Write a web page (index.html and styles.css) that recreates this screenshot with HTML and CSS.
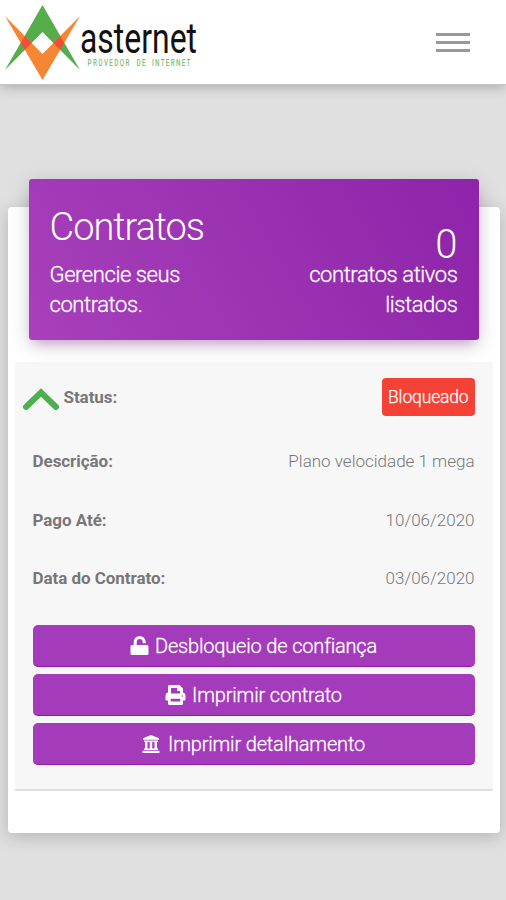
FILE: index.html
```html
<!doctype html>
<html lang="pt-br">
<head>
	<meta charset="utf-8">
	<title>Asternet - Contratos</title>
	<link rel="stylesheet" href="styles.css">
</head>
<body>

	<!--topo-->
	<header class="topo">
		<svg class="logo" width="206" height="84" viewBox="0 0 206 84">
			<path fill="#56ad4b" d="M42.5 5L80 70 42.5 32 5 70z"/>
			<path fill="#f58634" d="M5 16L42.5 54 80 16 42.5 80z"/>
			<path fill="#f04e37" d="M24.7 36L31.6 43 24.8 50 20.7 43zM60.3 36L53.4 43 60.2 50 64.3 43z"/>
			<text class="logo_nome" x="80" y="53" textLength="117" lengthAdjust="spacingAndGlyphs">asternet</text>
			<g class="logo_sub" transform="scale(.7 1)">
				<text x="125" y="66" textLength="60">PROVEDOR</text>
				<text x="195" y="66" textLength="13">DE</text>
				<text x="217" y="66" textLength="55">INTERNET</text>
			</g>
		</svg>
		<button class="menu" type="button" aria-label="Menu">
			<span></span>
			<span></span>
			<span></span>
		</button>
	</header>
	<!--fim topo-->

	<!--card-->
	<main class="card">
		<div class="card_header">
			<div class="card_titulo">
				<h1>Contratos</h1>
				<p>Gerencie seus contratos.</p>
			</div>
			<div class="card_total">
				<strong>0</strong>
				<p>contratos ativos listados</p>
			</div>
		</div>

		<section class="contrato">
			<div class="linha status">
				<svg class="seta" width="36" height="24" viewBox="0 0 36 24">
					<path d="M3 20L18 5.500 33 20" fill="none" stroke="#4caf50" stroke-width="6" stroke-linecap="round"/>
				</svg>
				<b>Status:</b>
				<span class="badge">Bloqueado</span>
			</div>
			<div class="linha"><b>Descrição:</b><span>Plano velocidade 1 mega</span></div>
			<div class="linha"><b>Pago Até:</b><span>10/06/2020</span></div>
			<div class="linha"><b>Data do Contrato:</b><span>03/06/2020</span></div>

			<div class="botoes">
				<button class="btn" type="button">
					<svg width="19" height="22" viewBox="0 0 19 22">
						<path fill="#fff" d="M2 10h1.700V7a6 6 0 0 1 12 0v1.200h-3V7a3 3 0 0 0-6 0v3H17a1.500 1.500 0 0 1 1.500 1.500v7A1.500 1.500 0 0 1 17 20H2a1.500 1.500 0 0 1-1.500-1.500v-7A1.500 1.500 0 0 1 2 10z"/>
					</svg>
					<span>Desbloqueio de confiança</span>
				</button>
				<button class="btn btn_print" type="button">
					<svg width="21" height="22" viewBox="0 0 21 22">
						<path fill="#fff" fill-rule="evenodd" d="M3 8.500V2.500A1.500 1.500 0 0 1 4.500 1h10L18 4.500v4a3 3 0 0 1 2.500 3v4a1 1 0 0 1-1 1H18v3a1.500 1.500 0 0 1-1.500 1.500h-12A1.500 1.500 0 0 1 3 19.500v-3H1.500a1 1 0 0 1-1-1v-4a3 3 0 0 1 2.500-3zM6 4v5.500h9V7h-2.800V4zM5.700 14.800v2.700h9.600v-2.700z"/>
						<circle cx="17.300" cy="12" r=".7" fill="#a43bba"/>
					</svg>
					<span>Imprimir contrato</span>
				</button>
				<button class="btn btn_banco" type="button">
					<svg width="18" height="20" viewBox="0 0 18 20">
						<path fill="#fff" d="M9 1l8 3.200v1.600H1V4.200zM2 6.500h14V8H2zM3 8h2.500v6.500H3zM7.750 8h2.500v6.500h-2.500zM12.500 8H15v6.500h-2.500zM2 14.500h14V16H2zM.5 16.800h17V19H.5z"/>
					</svg>
					<span>Imprimir detalhamento</span>
				</button>
			</div>
		</section>
	</main>
	<!--fim card-->

</body>
</html>
```
FILE: styles.css
```css
*{margin:0;padding:0;box-sizing:border-box;}
body{min-height:900px;background:#e0e0e0;font-family:Roboto,"Liberation Sans",sans-serif;font-weight:300;color:#777;}
button{border:none;font-family:inherit;cursor:pointer;}

/*topo*/
.topo{display:flex;justify-content:space-between;align-items:center;height:85px;padding-right:36px;background:#fff;box-shadow:0 2px 12px rgba(0,0,0,.25);border-bottom:1px solid #c4c4c4;}
.logo{display:block;}
.logo_nome{font-size:43px;font-weight:400;fill:#111;}
.logo_sub{font-size:9px;font-weight:500;fill:#7cc074;}
.menu{display:flex;flex-direction:column;gap:5px;width:34px;padding-top:1px;background:none;}
.menu span{height:3px;background:#999;}

/*card*/
.card{width:492px;height:626px;margin:122px 0 0 7.500px;padding:0 7px;background:#fff;border-radius:4px;box-shadow:0 4px 18px rgba(0,0,0,.2);}
.card_header{display:flex;justify-content:space-between;width:450px;height:161px;margin:0 14px;padding:26px 21px 0;color:#fff;border-radius:3px;background:linear-gradient(60deg,#a840bb,#8d24a9);box-shadow:0 5px 22px rgba(0,0,0,.15),0 7px 12px -5px rgba(156,39,176,.4);transform:translateY(-28px);}
.card_header p{font-size:22px;line-height:30px;letter-spacing:-.420px;-webkit-text-stroke:.3px #fff;}
.card_titulo{width:170px;}
.card_titulo h1{margin-bottom:11px;font-size:38px;line-height:44px;font-weight:300;letter-spacing:-1.050px;}
.card_total{width:170px;padding-top:21px;text-align:right;}
.card_total strong{display:block;font-size:40px;line-height:38px;height:34px;font-weight:300;}

/*contrato*/
.contrato{height:429px;margin-top:-6px;padding:0 18px;background:#f7f7f7;border-bottom:2px solid #e0e0e0;}
.linha{display:flex;justify-content:space-between;align-items:center;height:58.500px;font-size:17px;}
.linha b{font-weight:700;letter-spacing:-.050px;}
.status{height:70px;margin-left:-10px;}
.seta{margin:4px 5px 0 0;}
.badge{height:38px;margin-left:auto;padding:0 6px;border-radius:4px;background:#f44336;color:#fff;font-size:17.500px;line-height:38px;letter-spacing:-.150px;-webkit-text-stroke:.25px #fff;}

/*botoes*/
.botoes{display:flex;flex-direction:column;gap:7px;margin-top:17px;}
.btn{display:flex;justify-content:center;align-items:center;gap:6px;height:42px;padding-top:1px;border-radius:5px;background:#a43bba;border-bottom:1px solid #9118a8;color:#fff;font-size:20px;font-weight:300;letter-spacing:-.170px;-webkit-text-stroke:.3px #fff;}
.btn_banco{gap:8px;}
```
